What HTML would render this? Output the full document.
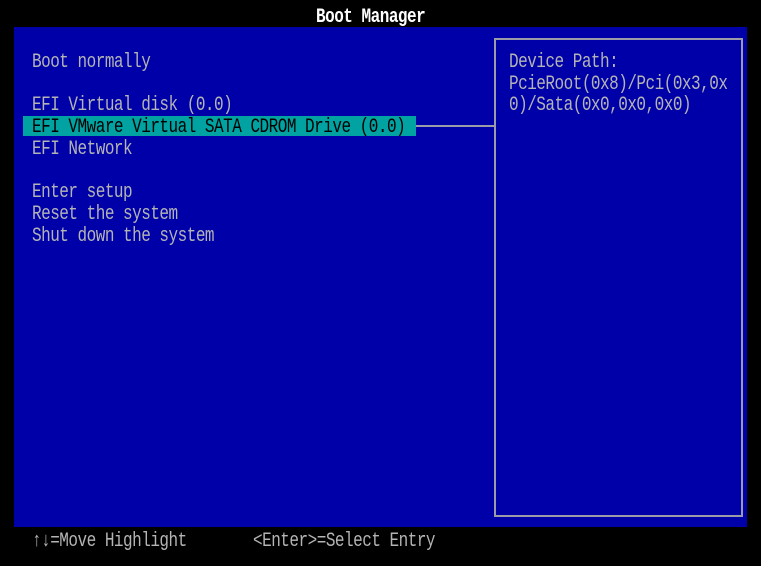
<!DOCTYPE html>
<html><head><style>
body{margin:0;width:761px;height:566px;background:#000;overflow:hidden;position:relative;font-family:"Liberation Mono","DejaVu Sans Mono",monospace;}
.t{position:absolute;height:22px;line-height:22px;font-size:16px;letter-spacing:-0.5px;color:#b4b4b4;white-space:pre;transform:scaleY(1.25);transform-origin:0 50%;}
#panel{position:absolute;left:14px;top:27px;width:733px;height:500px;background:#0000a8;}
#box{position:absolute;left:494px;top:38px;width:249px;height:479px;border:2px solid #9c9ca8;box-sizing:border-box;}
#hl{position:absolute;left:23px;top:116px;width:393px;height:20px;background:#00a2a2;}
#ln{position:absolute;left:416px;top:125px;width:80px;height:2px;background:#9c9ca8;}
</style></head><body>
<div class="t" style="left:316px;top:6px;color:#fff;font-weight:bold;">Boot Manager</div>
<div id="panel"></div>
<div id="box"></div>
<div id="hl"></div>
<div id="ln"></div>
<div class="t" style="left:32px;top:51px;">Boot normally</div>
<div class="t" style="left:32px;top:94px;">EFI Virtual disk (0.0)</div>
<div class="t" style="left:32px;top:116px;color:#000;">EFI VMware Virtual SATA CDROM Drive (0.0)</div>
<div class="t" style="left:32px;top:138px;">EFI Network</div>
<div class="t" style="left:32px;top:181px;">Enter setup</div>
<div class="t" style="left:32px;top:203px;">Reset the system</div>
<div class="t" style="left:32px;top:225px;">Shut down the system</div>
<div class="t" style="left:509px;top:51px;">Device Path:</div>
<div class="t" style="left:509px;top:73px;">PcieRoot(0x8)/Pci(0x3,0x</div>
<div class="t" style="left:509px;top:94px;">0)/Sata(0x0,0x0,0x0)</div>
<div class="t" style="left:32px;top:530px;">↑↓=Move Highlight</div>
<div class="t" style="left:253px;top:530px;">&lt;Enter&gt;=Select Entry</div>
</body></html>
